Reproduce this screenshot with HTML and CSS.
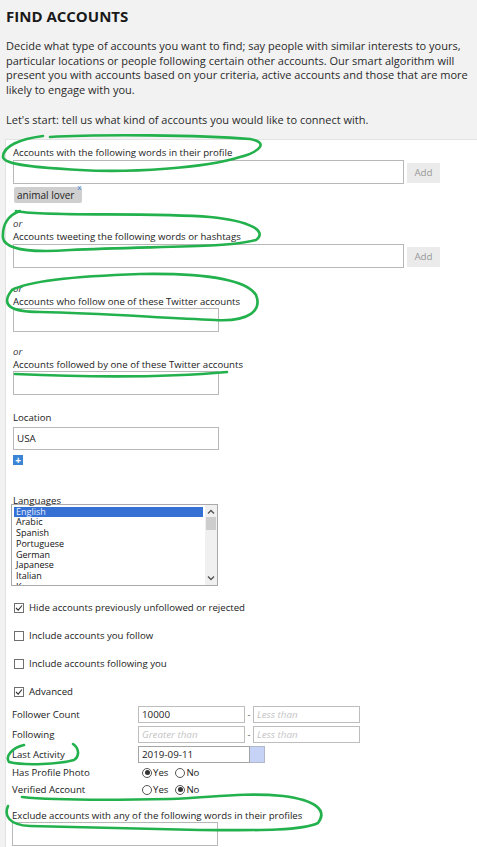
FILE: index.html
```html
<!DOCTYPE html>
<html lang="en">

<head>
  <meta charset="UTF-8">
  <meta name="viewport" content="width=device-width, initial-scale=1.0">
  <title>Find Accounts</title>
  <link rel="stylesheet" href="styles.css">
</head>

<body>
  <div class="intro-area">
    <h1>FIND ACCOUNTS</h1>
    <p class="intro">Decide what type of accounts you want to find; say people with similar interests to yours, particular locations or people following certain other accounts. Our smart algorithm will present you with accounts based on your criteria, active accounts and those that are more likely to engage with you.</p>
    <p class="intro start">Let's start: tell us what kind of accounts you would like to connect with.</p>
  </div>

  <div class="panel">
    <div class="field first">
      <div class="label">Accounts with the following words in their profile</div>
      <div class="add-row">
        <input type="text" class="wide-input">
        <button class="add-btn">Add</button>
      </div>
      <div class="tags">
        <span class="tag">animal lover<span class="tag-x">x</span></span>
      </div>
    </div>

    <div class="field second">
      <div class="or">or</div>
      <div class="label">Accounts tweeting the following words or hashtags</div>
      <div class="add-row">
        <input type="text" class="wide-input">
        <button class="add-btn">Add</button>
      </div>
    </div>

    <div class="field third">
      <div class="or">or</div>
      <div class="label">Accounts who follow one of these Twitter accounts</div>
      <input type="text" class="short-input">
    </div>

    <div class="field">
      <div class="or">or</div>
      <div class="label">Accounts followed by one of these Twitter accounts</div>
      <input type="text" class="short-input">
    </div>

    <div class="field location">
      <div class="label">Location</div>
      <input type="text" class="short-input" value="USA">
      <div class="plus-btn">+</div>
    </div>

    <div class="field languages">
      <div class="label">Languages</div>
      <div class="listbox" role="listbox">
        <div class="options">
          <div class="option selected">English</div>
          <div class="option">Arabic</div>
          <div class="option">Spanish</div>
          <div class="option">Portuguese</div>
          <div class="option">German</div>
          <div class="option">Japanese</div>
          <div class="option">Italian</div>
          <div class="option">Korean</div>
        </div>
        <div class="scrollbar">
          <svg class="arrow" width="12" height="10" viewBox="0 0 12 10"><path d="M3 6.5 L6 3.5 L9 6.5" fill="none" stroke="#555" stroke-width="1.4"/></svg>
          <div class="thumb"></div>
          <div class="track"></div>
          <svg class="arrow" width="12" height="10" viewBox="0 0 12 10"><path d="M3 3.5 L6 6.5 L9 3.5" fill="none" stroke="#555" stroke-width="1.4"/></svg>
        </div>
      </div>
    </div>

    <div class="check-list">
      <div class="check-row">
        <span class="check on"><svg width="8" height="8" viewBox="0 0 8 8"><path d="M1 4 L3.2 6.2 L7 1.5" fill="none" stroke="#333" stroke-width="1.1"/></svg></span>
        Hide accounts previously unfollowed or rejected
      </div>
      <div class="check-row">
        <span class="check"></span>
        Include accounts you follow
      </div>
      <div class="check-row">
        <span class="check"></span>
        Include accounts following you
      </div>
      <div class="check-row">
        <span class="check on"><svg width="8" height="8" viewBox="0 0 8 8"><path d="M1 4 L3.2 6.2 L7 1.5" fill="none" stroke="#333" stroke-width="1.1"/></svg></span>
        Advanced
      </div>
    </div>

    <div class="advanced">
      <div class="adv-label">Follower Count</div>
      <div class="range">
        <input type="text" class="num-input" value="10000">
        <span class="dash">-</span>
        <input type="text" class="num-input" placeholder="Less than">
      </div>

      <div class="adv-label">Following</div>
      <div class="range">
        <input type="text" class="num-input" placeholder="Greater than">
        <span class="dash">-</span>
        <input type="text" class="num-input" placeholder="Less than">
      </div>

      <div class="adv-label">Last Activity</div>
      <div class="date-wrap">
        <input type="text" class="date-input" value="2019-09-11">
        <span class="date-btn"></span>
      </div>

      <div class="adv-label small">Has Profile Photo</div>
      <div class="radios">
        <span class="radio on"></span>Yes
        <span class="radio"></span>No
      </div>

      <div class="adv-label small">Verified Account</div>
      <div class="radios">
        <span class="radio"></span>Yes
        <span class="radio on"></span>No
      </div>
    </div>

    <div class="field exclude">
      <div class="label">Exclude accounts with any of the following words in their profiles</div>
      <input type="text" class="short-input">
    </div>
  </div>

  <!-- hand drawn marks on top of the screenshot -->
  <svg class="marks" width="477" height="847" viewBox="0 0 477 847">
    <g fill="none" stroke="#22b14c" stroke-width="2.6" stroke-linecap="round" stroke-linejoin="round">
      <path d="M43,136 C20,139 3,146 3,157 C4,165 40,168 80,170 C130,173 205,168 240,157 C262,151 268,142 250,139 C200,135 100,134 50,137"/>
      <path d="M16,211 C40,217 150,212 210,217 C250,221 268,231 256,240 C230,248 150,246 70,250 C30,253 5,249 3,238 C2,225 8,215 20,211"/>
      <path d="M12,290 C30,280 80,276 140,274 C200,273 245,278 256,295 C262,310 250,322 215,320 C160,318 100,313 40,312 C10,312 0,305 12,290"/>
      <path d="M15,374 C60,376 150,379 227,372"/>
      <path d="M24,745 C12,748 5,756 9,762 C25,766 60,764 74,760 C80,756 79,748 73,744"/>
      <path d="M22,797 C60,801 120,800 170,799 C210,798 240,792 283,796 C315,800 328,810 318,823 C300,832 240,830 200,830 C140,829 80,827 30,826 C8,825 4,815 8,806"/>
    </g>
  </svg>
</body>

</html>
```

FILE: styles.css
```css
* {
  box-sizing: border-box;
}

body {
  margin: 0;
  background-color: #f2f2f2;
  font-family: "Open Sans", "Liberation Sans", sans-serif;
  color: #222;
  position: relative;
  height: 847px;
  overflow: hidden;
}

/* 顶部说明 */
.intro-area {
  padding: 7px 0 0 6px;
}

h1 {
  margin: 0;
  font-size: 15px;
  font-weight: 700;
  line-height: 19px;
  color: #1a1a1a;
}

.intro {
  margin: 13px 0 0 0;
  font-size: 11px;
  line-height: 14.7px;
  color: #2a2a2a;
}

.intro.start {
  margin-top: 15px;
}

/* 白色表单区 */
.panel {
  margin: 11px 0 0 5px;
  background-color: white;
  border-top: 1px solid #e2e2e2;
  border-left: 1px solid #e2e2e2;
  padding: 6px 0 40px 7px;
}

.label {
  font-size: 9.65px;
  line-height: 13px;
  color: #222;
  white-space: nowrap;
}

.or {
  font-size: 9.65px;
  line-height: 13px;
  font-style: italic;
  color: #333;
}

.field {
  margin-top: 13px;
}

.field.first {
  margin-top: 0;
}

.field.second {
  margin-top: 14px;
}

.field.third {
  margin-top: 14px;
}

.field.first .label,
.field.second .label {
  margin-bottom: 1px;
}

input {
  font-family: "Open Sans", "Liberation Sans", sans-serif;
  color: #222;
  outline: none;
}

.add-row {
  display: flex;
  align-items: flex-end;
  gap: 3px;
}

.wide-input {
  width: 391px;
  height: 24px;
  border: 1px solid #b8b8b8;
  padding: 0 3px;
  font-size: 10px;
  display: block;
}

.add-btn {
  width: 33px;
  height: 20px;
  margin-bottom: 1px;
  border: none;
  background-color: #ebebeb;
  color: #999;
  font-family: "Open Sans", sans-serif;
  font-size: 9.8px;
  padding: 0;
}

.tags {
  margin-top: 3px;
  display: flex;
}

.tag {
  position: relative;
  display: inline-block;
  height: 16px;
  line-height: 16px;
  margin-left: 1px;
  padding: 0 8px 0 3px;
  background-color: #cfcfcf;
  border-radius: 2px;
  font-size: 10px;
  color: #222;
}

.tag-x {
  position: absolute;
  top: -5px;
  right: 1px;
  font-size: 8px;
  line-height: 10px;
  color: #3f86d6;
}

.short-input {
  display: block;
  width: 206px;
  height: 24px;
  border: 1px solid #b8b8b8;
  padding: 0 3px;
  font-size: 9.8px;
}

.location {
  margin-top: 16px;
}

.location .short-input {
  margin-top: 3px;
  height: 23px;
}

.plus-btn {
  margin-top: 5px;
  width: 10px;
  height: 10px;
  background-color: #3b86d4;
  color: white;
  font-size: 10px;
  line-height: 10px;
  text-align: center;
  font-weight: 700;
}

/* 语言列表 */
.languages {
  margin-top: 29px;
}

.listbox {
  margin: -3px 0 0 -2px;
  width: 207px;
  height: 82px;
  border: 1px solid #a9a9a9;
  background-color: white;
  display: flex;
  overflow: hidden;
}

.options {
  flex: 1;
  padding: 2px 2px 0 2px;
  overflow: hidden;
}

.option {
  font-size: 9px;
  line-height: 10.75px;
  height: 10.75px;
  padding-left: 2px;
  color: #111;
  white-space: nowrap;
}

.option.selected {
  background-color: #3570d4;
  color: #e8eefc;
}

.scrollbar {
  width: 12px;
  background-color: #f0f0f0;
  display: flex;
  flex-direction: column;
  align-items: center;
}

.scrollbar .arrow {
  display: block;
  margin-top: 2px;
}

.thumb {
  width: 10px;
  height: 13px;
  background-color: #cdcdcd;
}

.track {
  flex: 1;
}

.scrollbar .arrow:last-child {
  margin: 0 0 2px 0;
}

/* 复选框 */
.check-list {
  margin-top: 15px;
}

.check-row {
  display: flex;
  align-items: center;
  height: 14px;
  margin-top: 14px;
  font-size: 9.65px;
  color: #222;
  white-space: nowrap;
}

.check-row:first-child {
  margin-top: 0;
}

.check {
  width: 10px;
  height: 10px;
  border: 1px solid #6f6f6f;
  margin: 0 5px 0 1px;
  display: flex;
  align-items: center;
  justify-content: center;
  background-color: white;
}

/* 高级选项 */
.advanced {
  margin: 7px 0 0 -1px;
  display: grid;
  grid-template-columns: 126px auto;
  row-gap: 3px;
  align-items: center;
}

.adv-label {
  font-size: 9.65px;
  line-height: 17px;
  color: #222;
  white-space: nowrap;
}

.adv-label.small {
  line-height: 14px;
}

.range {
  display: flex;
  align-items: center;
}

.num-input {
  width: 107px;
  height: 17px;
  border: 1px solid #bdbdbd;
  padding: 0 3px;
  font-size: 9.8px;
}

.num-input::placeholder {
  color: #c4c4c4;
  font-style: italic;
}

.dash {
  width: 8px;
  text-align: center;
  font-size: 9px;
  color: #555;
}

.date-wrap {
  display: flex;
}

.date-input {
  width: 112px;
  height: 17px;
  border: 1px solid #a4a4a4;
  padding: 0 3px;
  font-size: 9.8px;
}

.date-btn {
  width: 15px;
  height: 17px;
  background-color: #c7d2f7;
  border: 1px solid #b2b8cc;
  border-left: none;
}

.radios {
  display: flex;
  align-items: center;
  height: 14px;
  font-size: 9.65px;
  color: #222;
  padding-left: 4px;
}

.radio {
  width: 10px;
  height: 10px;
  border: 1px solid #555;
  border-radius: 50%;
  margin-right: 1px;
  display: inline-flex;
  align-items: center;
  justify-content: center;
  background-color: white;
}

.radios .radio:nth-of-type(2) {
  margin-left: 7px;
}

.radio.on::after {
  content: "";
  width: 5px;
  height: 5px;
  border-radius: 50%;
  background-color: #333;
}

.exclude {
  margin-top: 12px;
  margin-left: -1px;
}

.exclude .short-input {
  margin-top: 0;
}

/* 绿色手绘标记 */
.marks {
  position: absolute;
  top: 0;
  left: 0;
  pointer-events: none;
}
```
